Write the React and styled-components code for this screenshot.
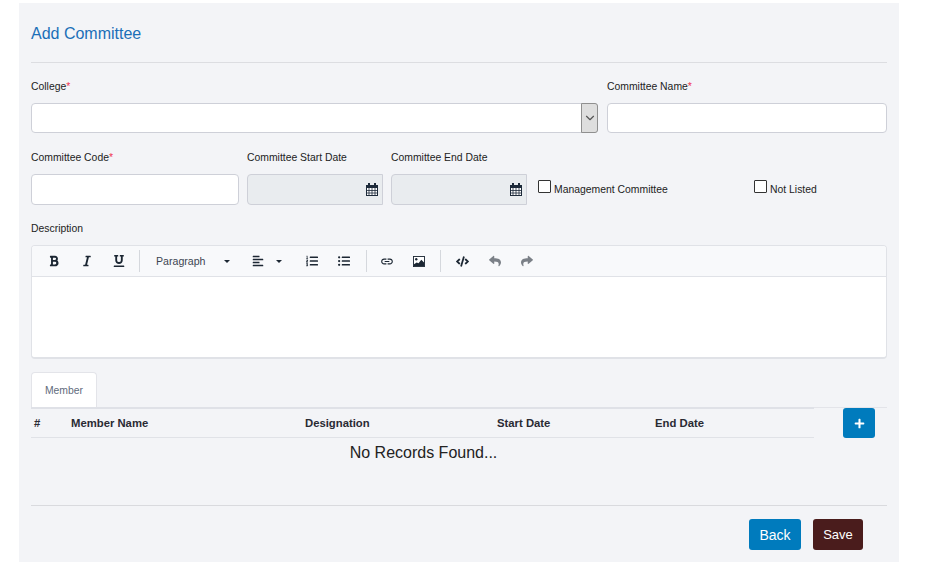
import React from "react";
import styled, { createGlobalStyle } from "styled-components";
import {
	FaBold,
	FaItalic,
	FaUnderline,
	FaAlignLeft,
	FaListOl,
	FaListUl,
	FaCode,
	FaReply,
	FaShare,
	FaPlus,
} from "react-icons/fa";
import { MdLink } from "react-icons/md";
import { FiChevronDown } from "react-icons/fi";

const GlobalStyle = createGlobalStyle`
	html, body {
		margin: 0;
		padding: 0;
		background: #fff;
		font-family: "Liberation Sans", Arial, sans-serif;
	}
`;

const Panel = styled.div`
	width: 856px;
	height: 559px;
	margin: 3px 0 0 19px;
	padding: 0 12px;
	background: #f3f4f7;
	overflow: hidden;
`;

const Title = styled.h3`
	height: 59px;
	margin: 0;
	border-bottom: 1px solid #dcdde1;
	box-sizing: content-box;
	font-size: 16px;
	font-weight: 400;
	line-height: 62px;
	color: #1b6fb8;
`;

const Row = styled.div`
	display: flex;
	gap: ${(props) => props.$gap || 8}px;
	margin-top: ${(props) => props.$top}px;
`;

const Field = styled.div`
	width: ${(props) => props.$width}px;
	flex: none;
`;

const Label = styled.label`
	display: block;
	height: 12px;
	margin-bottom: 10px;
	font-size: 10.4px;
	line-height: 12px;
	color: #222;
`;

const Star = styled.span`
	color: #f0324f;
`;

const Input = styled.div`
	position: relative;
	box-sizing: border-box;
	height: ${(props) => props.$height}px;
	background: ${(props) => (props.$disabled ? "#e9ecef" : "#fff")};
	border: 1px solid #ced0d8;
	border-radius: ${(props) => (props.$disabled ? "4px 0 0 4px" : "4px")};
	color: #222;
`;

const SelectArrow = styled.span`
	position: absolute;
	top: -1px;
	right: -1px;
	bottom: -1px;
	box-sizing: border-box;
	width: 17px;
	display: flex;
	align-items: center;
	justify-content: center;
	background: #dedede;
	border: 1px solid #8f8f8f;
	border-radius: 0 3px 3px 0;
	color: #555;
	font-size: 14px;
`;

const DateIcon = styled.svg`
	position: absolute;
	right: 4px;
	top: 8px;
	width: 12px;
	height: 13px;
`;

const CheckField = styled.div`
	display: flex;
	align-items: flex-start;
	width: ${(props) => props.$width}px;
	flex: none;
	padding-top: 22px;
	margin-left: ${(props) => props.$left || 0}px;
`;

const CheckBox = styled.span`
	box-sizing: border-box;
	width: 13px;
	height: 13px;
	border: 1px solid #333;
	border-radius: 1px;
	background: #fff;
	flex: none;
	margin: 6px 3px 0 0;
`;

const CheckLabel = styled.span`
	font-size: 10.4px;
	line-height: 12px;
	color: #222;
	margin-top: 10px;
	white-space: nowrap;
`;

const Editor = styled.div`
	box-sizing: border-box;
	height: 114px;
	background: #fff;
	border: 1px solid #e0e2e7;
	border-bottom-width: 2px;
	border-radius: 4px;
	overflow: hidden;
`;

const Toolbar = styled.div`
	display: flex;
	align-items: center;
	height: 30px;
	background: #f8f9fb;
	border-bottom: 1px solid #e0e2e7;
	color: #1c2733;
`;

const ToolButton = styled.span`
	display: flex;
	align-items: center;
	justify-content: center;
	width: ${(props) => props.$width || 14}px;
	margin-left: ${(props) => props.$left || 0}px;
	font-size: ${(props) => props.$size || 12}px;
	color: ${(props) => (props.$muted ? "#7b8087" : "#1c2733")};
`;

const Caret = styled.span`
	width: 0;
	height: 0;
	margin-left: ${(props) => props.$left}px;
	border-left: 3px solid transparent;
	border-right: 3px solid transparent;
	border-top: 3px solid #1c2733;
`;

const ToolDivider = styled.span`
	width: 1px;
	height: 22px;
	background: #d5d8dd;
	margin-left: ${(props) => props.$left}px;
`;

const ParagraphText = styled.span`
	font-size: 10.6px;
	color: #3c4552;
	margin-left: 16px;
`;

const ImageIcon = styled.svg`
	width: 12px;
	height: 11px;
`;

const Tabs = styled.div`
	margin-top: 13px;
	height: 35px;
`;

const Tab = styled.div`
	box-sizing: border-box;
	width: 66px;
	height: 35px;
	background: #fff;
	border: 1px solid #e3e4e9;
	border-bottom: none;
	border-radius: 4px 4px 0 0;
	font-size: 10.4px;
	line-height: 36px;
	text-align: center;
	color: #5f6b7c;
`;

const TableArea = styled.div`
	position: relative;
	height: 97px;
	border-top: 1px solid #e3e4e9;
`;

const TableHead = styled.div`
	display: grid;
	grid-template-columns: 40px 234px 192px 158px 159px;
	width: 783px;
	box-sizing: border-box;
	height: 31px;
	margin-top: -1px;
	border-top: 2px solid #dfe1e7;
	border-bottom: 1px solid #e0e2e7;
	font-size: 11.3px;
	font-weight: 700;
	line-height: 28px;
	color: #2a2a33;
`;

const HeadCell = styled.div`
	padding-left: ${(props) => props.$left || 0}px;
`;

const AddButton = styled.button`
	position: absolute;
	top: 0;
	right: 12px;
	width: 32px;
	height: 30px;
	display: flex;
	align-items: center;
	justify-content: center;
	padding: 0;
	border: none;
	border-radius: 3px;
	background: #007bbd;
	color: #fff;
	font-size: 11px;
`;

const Empty = styled.div`
	width: 785px;
	font-size: 16px;
	line-height: 30px;
	text-align: center;
	color: #222;
`;

const Footer = styled.div`
	display: flex;
	justify-content: flex-end;
	gap: 12px;
	padding: 13px 24px 0 0;
	border-top: 1px solid #d9dade;
`;

const ActionButton = styled.button`
	height: 31px;
	width: ${(props) => props.$width}px;
	padding: 0;
	border: none;
	border-radius: 3px;
	background: ${(props) => props.$bg};
	color: #fff;
	font-family: "Liberation Sans", Arial, sans-serif;
	font-size: ${(props) => props.$size || 14}px;
`;

const CalendarGlyph = () => (
	<DateIcon viewBox="0 0 12 13">
		<rect x="0.5" y="2.5" width="11" height="10" fill="#fff" stroke="#1d2a3a" />
		<rect x="0" y="2" width="12" height="3" fill="#1d2a3a" />
		<rect x="2" y="0" width="2" height="3.5" fill="#1d2a3a" />
		<rect x="8" y="0" width="2" height="3.5" fill="#1d2a3a" />
		<path
			d="M3 5v7M6 5v7M9 5v7M1 7.5h10M1 10h10"
			stroke="#1d2a3a"
			strokeWidth="0.8"
			fill="none"
		/>
	</DateIcon>
);

const PictureGlyph = () => (
	<ImageIcon viewBox="0 0 13 12">
		<rect x="0.5" y="0.5" width="12" height="11" fill="#fff" stroke="#1c2733" />
		<circle cx="3.5" cy="3.5" r="1.3" fill="#1c2733" />
		<path d="M1 11V9l3-2 2 1 3-4 3 3v4z" fill="#1c2733" />
	</ImageIcon>
);

const App = () => {
	return (
		<>
			<GlobalStyle />
			<Panel>
				<Title>Add Committee</Title>
				<Row $top={18} $gap={9}>
					<Field $width={567}>
						<Label>
							College<Star>*</Star>
						</Label>
						<Input $height={30}>
							<SelectArrow>
								<FiChevronDown />
							</SelectArrow>
						</Input>
					</Field>
					<Field $width={280}>
						<Label>
							Committee Name<Star>*</Star>
						</Label>
						<Input $height={30} />
					</Field>
				</Row>
				<Row $top={19}>
					<Field $width={208}>
						<Label>
							Committee Code<Star>*</Star>
						</Label>
						<Input $height={31} />
					</Field>
					<Field $width={136}>
						<Label>Committee Start Date</Label>
						<Input $height={31} $disabled>
							<CalendarGlyph />
						</Input>
					</Field>
					<Field $width={136}>
						<Label>Committee End Date</Label>
						<Input $height={31} $disabled>
							<CalendarGlyph />
						</Input>
					</Field>
					<CheckField $width={208} $left={3}>
						<CheckBox />
						<CheckLabel>Management Committee</CheckLabel>
					</CheckField>
					<CheckField $width={100}>
						<CheckBox />
						<CheckLabel>Not Listed</CheckLabel>
					</CheckField>
				</Row>
				<Row $top={18}>
					<Field $width={856}>
						<Label>Description</Label>
						<Editor>
							<Toolbar>
								<ToolButton $width={33} $left={5}>
									<FaBold />
								</ToolButton>
								<ToolButton $width={33}>
									<FaItalic />
								</ToolButton>
								<ToolButton $width={32}>
									<FaUnderline />
								</ToolButton>
								<ToolDivider $left={4} />
								<ParagraphText>Paragraph</ParagraphText>
								<Caret $left={19} />
								<ToolButton $left={21}>
									<FaAlignLeft />
								</ToolButton>
								<Caret $left={11} />
								<ToolButton $left={23}>
									<FaListOl />
								</ToolButton>
								<ToolButton $left={18}>
									<FaListUl />
								</ToolButton>
								<ToolDivider $left={15} />
								<ToolButton $left={13} $size={17}>
									<MdLink />
								</ToolButton>
								<ToolButton $left={18}>
									<PictureGlyph />
								</ToolButton>
								<ToolDivider $left={14} />
								<ToolButton $left={14} $size={13}>
									<FaCode />
								</ToolButton>
								<ToolButton $left={19} $muted>
									<FaReply />
								</ToolButton>
								<ToolButton $left={18} $muted>
									<FaShare />
								</ToolButton>
							</Toolbar>
						</Editor>
					</Field>
				</Row>
				<Tabs>
					<Tab>Member</Tab>
				</Tabs>
				<TableArea>
					<TableHead>
						<HeadCell $left={3}>#</HeadCell>
						<HeadCell>Member Name</HeadCell>
						<HeadCell>Designation</HeadCell>
						<HeadCell>Start Date</HeadCell>
						<HeadCell>End Date</HeadCell>
					</TableHead>
					<Empty>No Records Found...</Empty>
					<AddButton aria-label="Add member">
						<FaPlus />
					</AddButton>
				</TableArea>
				<Footer>
					<ActionButton $width={52} $bg="#007bbd">
						Back
					</ActionButton>
					<ActionButton $width={50} $bg="#4a1c1c" $size={13}>
						Save
					</ActionButton>
				</Footer>
			</Panel>
		</>
	);
};

export default App;
